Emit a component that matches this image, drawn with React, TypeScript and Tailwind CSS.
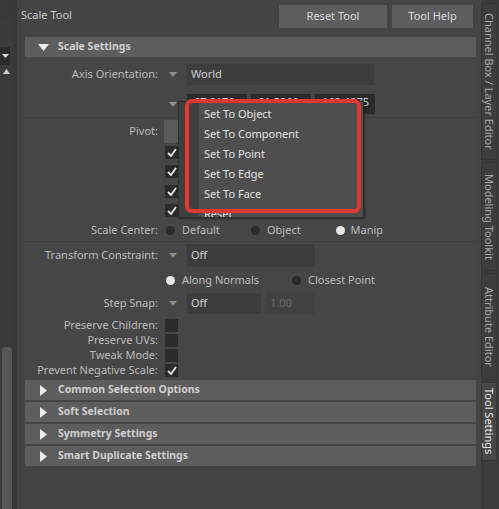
import React from "react";

const font = { fontFamily: '"Noto Sans", "Open Sans", sans-serif' };

function DownTri({ className = "" }: { className?: string }) {
  return (
    <svg width="8" height="5" viewBox="0 0 8 5" className={className}>
      <path d="M0 0 L8 0 L4 5 Z" fill="#8f8f8f" />
    </svg>
  );
}

function Check() {
  return (
    <div className="w-[13px] h-[13px] bg-[#2b2b2b] flex items-center justify-center">
      <svg width="10" height="9" viewBox="0 0 10 9">
        <path d="M1 5 L4 8 L9 1" stroke="#e8e8e8" strokeWidth="1.8" fill="none" />
      </svg>
    </div>
  );
}

function Box() {
  return <div className="w-[13px] h-[13px] bg-[#2b2b2b]" />;
}

function Radio({ on }: { on?: boolean }) {
  return (
    <div
      className={
        "w-[9px] h-[9px] rounded-full shrink-0 " + (on ? "bg-[#e6e6e6]" : "bg-[#2a2a2a]")
      }
    />
  );
}

function Row({
  label,
  h,
  children,
  tri,
}: {
  label?: string;
  h: string;
  children?: React.ReactNode;
  tri?: boolean;
}) {
  return (
    <div className={"flex items-center " + h}>
      <div className="w-[133px] text-right text-[11px] text-[#bdbdbd] whitespace-nowrap">
        {label}
      </div>
      <div className="w-[29px] flex items-center justify-center pl-[1px]">
        {tri ? <DownTri /> : null}
      </div>
      {children}
    </div>
  );
}

function FrameHeader({ title, open }: { title: string; open?: boolean }) {
  return (
    <div className="h-[20px] bg-[#5d5d5d] flex items-center rounded-[1px]">
      <div className="w-[33px] flex items-center justify-center pl-[3px]">
        {open ? (
          <svg width="11" height="7" viewBox="0 0 11 7">
            <path d="M0 0 L11 0 L5.5 7 Z" fill="#ededed" />
          </svg>
        ) : (
          <svg width="7" height="11" viewBox="0 0 7 11">
            <path d="M0 0 L7 5.5 L0 11 Z" fill="#ededed" />
          </svg>
        )}
      </div>
      <span className="text-[10.5px] font-bold text-[#cfcfcf]">{title}</span>
    </div>
  );
}

function Tab({ label, h, active }: { label: string; h: string; active?: boolean }) {
  return (
    <div
      className={
        "w-[16px] flex items-center justify-center border border-[#353535] " +
        h +
        (active ? " bg-[#474747] text-[#ececec]" : " bg-[#3d3d3d] text-[#a9a9a9]")
      }
    >
      <span className="[writing-mode:vertical-rl] text-[11px] whitespace-nowrap leading-[14px]">
        {label}
      </span>
    </div>
  );
}

export default function App() {
  return (
    <div
      className="w-[499px] h-[509px] bg-[#444444] flex relative overflow-hidden select-none"
      style={font}
    >
      {/* left strip */}
      <div className="w-[17px] h-full flex">
        <div className="w-[12px] h-full bg-[#3b3b3b] flex flex-col">
          <div className="h-[20px] bg-[#393939]" />
          <div className="h-[27px]" />
          <div className="h-[18px] w-[10px] bg-[#2b2b2b] flex items-center justify-center">
            <svg width="7" height="4" viewBox="0 0 7 4">
              <path d="M0 0 L7 0 L3.5 4 Z" fill="#dcdcdc" />
            </svg>
          </div>
          <div className="h-[12px] flex items-center justify-center pl-[1px]">
            <svg width="7" height="5" viewBox="0 0 7 5">
              <path d="M0 5 L7 5 L3.5 0 Z" fill="#cfcfcf" />
            </svg>
          </div>
          <div className="flex-1" />
          <div className="h-[162px] w-[10px] ml-[2px] bg-[#575757] rounded-t-[4px]" />
        </div>
        <div className="w-[5px] h-full bg-[#383838]" />
      </div>

      {/* main */}
      <div className="w-[462px] h-full flex flex-col">
        <div className="h-[37px] flex items-start">
          <div className="pl-[4px] pt-[7px] text-[11px] text-[#c9c9c9]">Scale Tool</div>
          <div className="flex-1" />
          <div className="flex gap-[5px] pt-[5px] pr-[6px]">
            <div className="w-[108px] h-[23px] bg-[#5d5d5d] flex items-center justify-center text-[11px] text-[#dcdcdc]">
              Reset Tool
            </div>
            <div className="w-[81px] h-[23px] bg-[#5d5d5d] flex items-center justify-center text-[11px] text-[#dcdcdc]">
              Tool Help
            </div>
          </div>
        </div>

        <div className="pl-[8px] pr-[3px] flex flex-col">
          <FrameHeader title="Scale Settings" open />
          <div className="bg-[#464646] flex flex-col">
            <div className="h-[6px]" />
            <Row label="Axis Orientation:" h="h-[22px]" tri>
              <div className="w-[187px] h-[21px] bg-[#3d3d3d] text-[11px] text-[#cfcfcf] flex items-center pl-[4px]">
                World
              </div>
            </Row>
            <div className="h-[9px]" />
            <Row h="h-[20px]" tri>
              <div className="flex gap-[4px]">
                {["67.2172", "61.5860", "162.4875"].map((v) => (
                  <div
                    key={v}
                    className="w-[60px] h-[20px] bg-[#2b2b2b] text-[11px] text-[#cfcfcf] flex items-start pt-[1px] pl-[7px] overflow-hidden leading-[14px]"
                  >
                    {v}
                  </div>
                ))}
              </div>
            </Row>
            <div className="h-[3px]" />
            <div className="h-[1px] bg-[#3e3e3e]" />
            <div className="h-[2px]" />
            <Row label="Pivot:" h="h-[23px]">
              <div className="ml-[-23px] w-[16px] h-[23px] bg-[#5a5a5a]" />
            </Row>
            {[0, 1, 2, 3].map((i) => (
              <Row key={i} h="h-[19.3px]">
                <div className="ml-[-22px]">
                  <Check />
                </div>
              </Row>
            ))}
            <Row label="Scale Center:" h="h-[21px]">
              <div className="ml-[-21.5px] flex items-center text-[11px] text-[#bdbdbd]">
                <Radio />
                <span className="ml-[7.5px] w-[68.5px]">Default</span>
                <Radio />
                <span className="ml-[7.5px] w-[68.5px]">Object</span>
                <Radio on />
                <span className="ml-[6px]">Manip</span>
              </div>
            </Row>
            <div className="h-[1px] bg-[#3e3e3e]" />
            <div className="h-[2px]" />
            <Row label="Transform Constraint:" h="h-[23px]" tri>
              <div className="w-[128px] h-[23px] bg-[#3d3d3d] text-[11px] text-[#cfcfcf] flex items-center pl-[4px]">
                Off
              </div>
            </Row>
            <Row h="h-[26px]">
              <div className="ml-[-21.5px] flex items-center text-[11px] text-[#bdbdbd]">
                <Radio on />
                <span className="ml-[7.5px] w-[109.5px]">Along Normals</span>
                <Radio />
                <span className="ml-[7.5px]">Closest Point</span>
              </div>
            </Row>
            <Row label="Step Snap:" h="h-[21px]" tri>
              <div className="w-[74px] h-[21px] bg-[#3d3d3d] text-[11px] text-[#cfcfcf] flex items-center pl-[4px]">
                Off
              </div>
              <div className="ml-[5px] w-[49px] h-[21px] bg-[#414141] text-[11px] text-[#6a6a6a] flex items-center pl-[4px]">
                1.00
              </div>
            </Row>
            <div className="h-[4px]" />
            {[
              ["Preserve Children:", false],
              ["Preserve UVs:", false],
              ["Tweak Mode:", false],
              ["Prevent Negative Scale:", true],
            ].map(([l, c]) => (
              <Row key={l as string} label={l as string} h="h-[15px]">
                <div className="ml-[-22px]">{c ? <Check /> : <Box />}</div>
              </Row>
            ))}
            <div className="h-[2px]" />
          </div>
          <div className="flex flex-col gap-[2px]">
            <FrameHeader title="Common Selection Options" />
            <FrameHeader title="Soft Selection" />
            <FrameHeader title="Symmetry Settings" />
            <FrameHeader title="Smart Duplicate Settings" />
          </div>
        </div>
      </div>

      {/* right tabs */}
      <div className="w-[20px] h-full bg-[#3c3c3c] flex">
        <div className="w-[2px] h-full bg-[#444444]" />
        <div className="flex flex-col gap-[2px] pt-[3px]">
          <Tab label="Channel Box / Layer Editor" h="h-[157px]" />
          <Tab label="Modeling Toolkit" h="h-[109px]" />
          <Tab label="Attribute Editor" h="h-[107px]" />
          <Tab label="Tool Settings" h="h-[79px]" active />
        </div>
      </div>

      {/* popup menu */}
      <div className="absolute left-[178px] top-[101px] w-[186px] h-[117px] bg-[#4e4e4e] border border-[#2f2f2f] shadow-[1px_1px_2px_rgba(0,0,0,0.4)] flex overflow-hidden">
        <div className="w-[20px] h-full bg-[#3f3f3f]" />
        <div className="flex flex-col pl-[5px] pt-[2px] text-[11px] text-[#e2e2e2] leading-[20px]">
          <div>Set To Object</div>
          <div>Set To Component</div>
          <div>Set To Point</div>
          <div>Set To Edge</div>
          <div>Set To Face</div>
          <div>Reset</div>
        </div>
      </div>
      {/* red highlight */}
      <div className="absolute left-[185px] top-[99px] w-[176px] h-[114px] border-[4px] border-[#e0382e] rounded-[7px]" />
    </div>
  );
}
